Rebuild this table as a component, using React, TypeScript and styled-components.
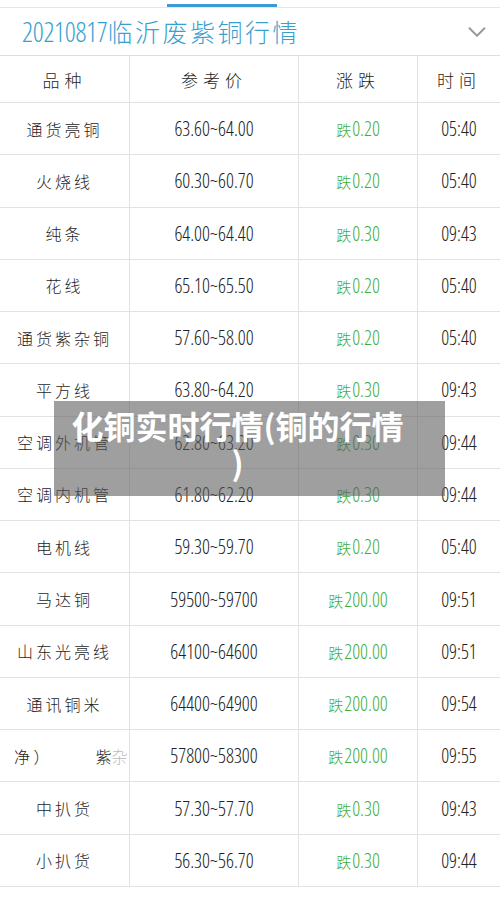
import React from "react";
import styled, { createGlobalStyle } from "styled-components";
import { ChevronDown } from "lucide-react";

const GlobalStyle = createGlobalStyle`
  html, body {
    margin: 0;
    padding: 0;
    background: #fff;
  }
  body {
    font-family: "Noto Sans CJK SC", "Noto Sans", sans-serif;
    color: #2a2a2a;
  }
`;

const Page = styled.div`
  width: 500px;
  height: 897px;
  position: relative;
  overflow: hidden;
  background: #fff;
`;

const TabStrip = styled.div`
  height: 7px;
  border-bottom: 1px solid #e6e6e6;
  display: flex;
  padding-left: 167px;
  align-items: flex-end;
`;

const TabIndicator = styled.div`
  width: 110px;
  height: 3px;
  background: #3d9ad6;
`;

const TitleBar = styled.div`
  height: 47px;
  display: flex;
  align-items: center;
  justify-content: space-between;
  padding: 0 8px 0 22px;
  border-bottom: 1px solid #dedede;
  color: #3a9fcf;
`;

const TitleText = styled.div`
  font-size: 25px;
  letter-spacing: 2.5px;
  font-weight: 300;
  line-height: 1;
`;

const TitleDigits = styled.span`
  font-family: "Open Sans", "DejaVu Sans", sans-serif;
  font-stretch: 75%;
  font-weight: 300;
  letter-spacing: -0.3px;
  font-size: 27px;
`;

const Table = styled.div`
  display: grid;
  grid-template-columns: 130px 169px 119px 82px;
`;

const Cell = styled.div<{ $head?: boolean; $last?: boolean }>`
  height: ${(p) => (p.$head ? "46px" : "51.27px")};
  border-bottom: 1px solid #e2e2e2;
  border-right: ${(p) => (p.$last ? "none" : "1px solid #e2e2e2")};
  display: flex;
  align-items: center;
  justify-content: center;
  overflow: hidden;
  white-space: nowrap;
`;

const Name = styled.span<{ $head?: boolean }>`
  font-size: ${(p) => (p.$head ? "17px" : "16px")};
  letter-spacing: ${(p) => (p.$head ? "5px" : "3px")};
  font-weight: 300;
  color: #1e1e1e;
`;

const Num = styled.span<{ $green?: boolean }>`
  font-family: "Open Sans", "DejaVu Sans", sans-serif;
  font-stretch: 75%;
  font-weight: 300;
  font-size: 19.5px;
  color: ${(p) => (p.$green ? "#3fae3f" : "#222")};
`;

const Fall = styled.span`
  font-family: "Noto Sans CJK SC", sans-serif;
  font-size: 15px;
  font-weight: 300;
  margin-right: 1px;
`;

const Clipped = styled.div`
  width: 100%;
  display: flex;
  align-items: center;
  padding-left: 14px;
  gap: 46px;
  font-size: 16px;
  font-weight: 300;
  color: #222;
`;

const Faded = styled.span`
  color: #bbb;
`;

const Overlay = styled.div`
  position: absolute;
  left: 54px;
  top: 401px;
  width: 391px;
  height: 95px;
  box-sizing: border-box;
  padding: 6px 40px 0 16px;
  background: rgba(90, 90, 90, 0.58);
  color: #fff;
  font-size: 32px;
  font-weight: 700;
  line-height: 37px;
  text-align: center;
  white-space: nowrap;
`;

type Row = { name: string; price: string; change: string; time: string };

const rows: Row[] = [
  { name: "通货亮铜", price: "63.60~64.00", change: "0.20", time: "05:40" },
  { name: "火烧线", price: "60.30~60.70", change: "0.20", time: "05:40" },
  { name: "纯条", price: "64.00~64.40", change: "0.30", time: "09:43" },
  { name: "花线", price: "65.10~65.50", change: "0.20", time: "05:40" },
  { name: "通货紫杂铜", price: "57.60~58.00", change: "0.20", time: "05:40" },
  { name: "平方线", price: "63.80~64.20", change: "0.30", time: "09:43" },
  { name: "空调外机管", price: "62.80~63.20", change: "0.30", time: "09:44" },
  { name: "空调内机管", price: "61.80~62.20", change: "0.30", time: "09:44" },
  { name: "电机线", price: "59.30~59.70", change: "0.20", time: "05:40" },
  { name: "马达铜", price: "59500~59700", change: "200.00", time: "09:51" },
  { name: "山东光亮线", price: "64100~64600", change: "200.00", time: "09:51" },
  { name: "通讯铜米", price: "64400~64900", change: "200.00", time: "09:54" },
  { name: "", price: "57800~58300", change: "200.00", time: "09:55" },
  { name: "中扒货", price: "57.30~57.70", change: "0.30", time: "09:43" },
  { name: "小扒货", price: "56.30~56.70", change: "0.30", time: "09:44" },
];

const App = () => {
  return (
    <Page>
      <GlobalStyle />
      <TabStrip>
        <TabIndicator />
      </TabStrip>
      <TitleBar>
        <TitleText>
          <TitleDigits>20210817</TitleDigits>临沂废紫铜行情
        </TitleText>
        <ChevronDown size={30} color="#9a9a9a" strokeWidth={1.6} />
      </TitleBar>
      <Table>
        <Cell $head><Name $head>品种</Name></Cell>
        <Cell $head><Name $head>参考价</Name></Cell>
        <Cell $head><Name $head>涨跌</Name></Cell>
        <Cell $head $last><Name $head>时间</Name></Cell>
        {rows.map((r, i) => (
          <React.Fragment key={i}>
            <Cell>
              {r.name ? (
                <Name>{r.name}</Name>
              ) : (
                <Clipped>
                  <span>净 ）</span>
                  <span>
                    紫<Faded>杂</Faded>
                  </span>
                </Clipped>
              )}
            </Cell>
            <Cell><Num>{r.price}</Num></Cell>
            <Cell>
              <Num $green>
                <Fall>跌</Fall>
                {r.change}
              </Num>
            </Cell>
            <Cell $last><Num>{r.time}</Num></Cell>
          </React.Fragment>
        ))}
      </Table>
      <Overlay>
        化铜实时行情(铜的行情
        <br />)
      </Overlay>
    </Page>
  );
};

export default App;
